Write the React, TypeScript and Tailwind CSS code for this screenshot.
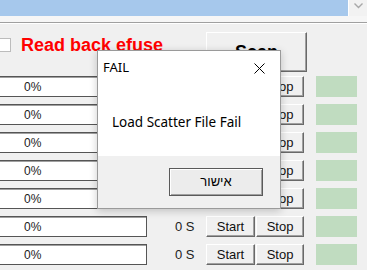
import React from "react";

const rows = Array.from({ length: 7 });

const RaisedButton = ({ label, className }: { label: string; className: string }) => (
  <div
    className={`flex items-center justify-center border border-t-white border-l-white border-b-[#696969] border-r-[#696969] bg-[#f0f0f0] text-[13px] text-[#111] shadow-[inset_-1px_-1px_0_#a0a0a0] ${className}`}
  >
    {label}
  </div>
);

const App = () => {
  return (
    <div className="relative w-[367px] h-[270px] overflow-hidden bg-[#f0f0f0] font-['Liberation_Sans',Arial,sans-serif]">
      {/* top strip */}
      <div className="flex h-[16px]">
        <div className="flex-1 bg-[#a6c8ec]" />
        <div className="w-[1px] bg-white" />
        <div className="w-[18px] flex items-start justify-center pt-[3px] bg-[#f2f2f2]">
          <svg width="9" height="6" viewBox="0 0 9 6">
            <path d="M0.5 0.5 L4.5 4.5 L8.5 0.5" fill="none" stroke="#a8a8a8" strokeWidth="1.4" />
          </svg>
        </div>
      </div>
      <div className="h-[6px] bg-[#f6f6f6]" />
      <div className="h-[1px] bg-[#a0a0a0]" />
      <div className="h-[1px] bg-white" />

      {/* header: checkbox + scan */}
      <div className="flex h-[52px] pt-[8px]">
        <div className="flex items-start w-[206px] pt-[6px]">
          <div className="-ml-[2px] w-[13px] h-[14px] bg-white border border-[#bcbcbc]" />
          <span className="ml-[10px] -mt-[4px] text-[18px] font-bold text-[#ff0000] leading-[22px] whitespace-nowrap">
            Read back efuse
          </span>
        </div>
        <div className="w-[101px] h-[40px] flex items-center justify-center border border-t-white border-l-white border-b-[#696969] border-r-[#696969] shadow-[inset_-1px_-1px_0_#a0a0a0] text-[18px] font-bold text-black">
          Scan
        </div>
      </div>

      {/* device rows */}
      <div className="flex flex-col gap-[7px]">
        {rows.map((_, i) => (
          <div key={i} className="flex h-[21px] items-stretch">
            <div className="-ml-[2px] w-[149px] flex items-center pl-[25px] bg-white border border-[#555] shadow-[inset_1px_1px_0_#a0a0a0] text-[12px] text-[#222]">
              0%
            </div>
            <div className="w-[59px] pl-[28px] flex items-center text-[13px] text-[#222]">0 S</div>
            <RaisedButton label="Start" className="w-[49px]" />
            <RaisedButton label="Stop" className="ml-[1px] w-[48px]" />
            <div className="ml-[12px] w-[41px] bg-[#c0dcc0]" />
          </div>
        ))}
      </div>

      {/* message box */}
      <div className="absolute left-[97px] top-[50px] w-[184px] h-[159px] flex flex-col bg-white border border-[#9a9a9a] shadow-[0_2px_8px_rgba(0,0,0,0.2)] font-['Noto_Sans','Liberation_Sans','DejaVu_Sans',sans-serif] text-black">
        <div className="flex items-center justify-between h-[34px] pl-[5px] pr-[15px]">
          <span className="text-[13px]">FAIL</span>
          <svg width="11" height="11" viewBox="0 0 11 11">
            <path d="M0.5 0.5 L10.5 10.5 M10.5 0.5 L0.5 10.5" stroke="#000" strokeWidth="1" />
          </svg>
        </div>
        <div className="flex-1 flex items-center pl-[14px] pt-[3px] text-[13.5px]">Load Scatter File Fail</div>
        <div className="h-[52px] bg-[#f0f0f0] flex items-center justify-end pr-[17px]">
          <div className="w-[94px] h-[28px] flex items-center justify-center border border-[#5a5a5a] bg-[#ececec] shadow-[inset_1px_1px_0_#fff,inset_-1px_-1px_0_#a0a0a0] text-[13px] font-['Liberation_Sans','DejaVu_Sans',sans-serif]">
            אישור
          </div>
        </div>
      </div>
    </div>
  );
};

export default App;
